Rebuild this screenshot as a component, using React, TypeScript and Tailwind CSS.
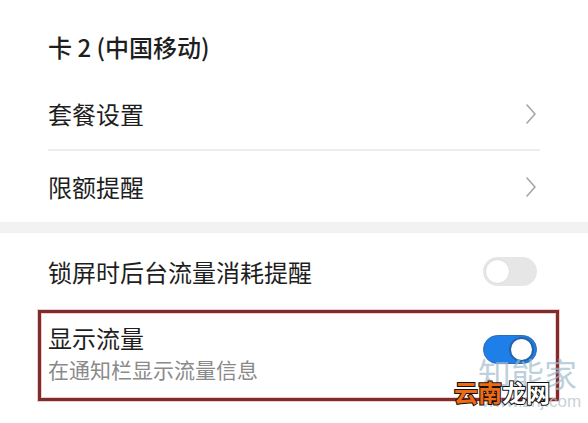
import React from "react";

function Chevron() {
  return (
    <svg width="12" height="22" viewBox="0 0 12 22" fill="none" className="mr-[3px]">
      <path d="M2 2 L10 11 L2 20" stroke="#a6a6a6" strokeWidth="1.6" strokeLinecap="round" strokeLinejoin="round" />
    </svg>
  );
}

function Toggle({ on }: { on: boolean }) {
  if (on) {
    return (
      <div className="w-[54px] h-[29px] rounded-full bg-[#1f7fe9] border border-[#2a6db5] flex items-center justify-end pr-[2px] shrink-0">
        <div className="w-[25px] h-[25px] rounded-full bg-white border-2 border-[#2463a8]" />
      </div>
    );
  }
  return (
    <div className="w-[54px] h-[29px] rounded-full bg-[#e6e6e6] flex items-center pl-[2px] shrink-0">
      <div className="w-[25px] h-[25px] rounded-full bg-white border border-[#dcdcdc]" />
    </div>
  );
}

export default function App() {
  return (
    <div className="relative w-[588px] h-[423px] overflow-hidden bg-white text-[#1e1e1e] font-['Noto_Sans_CJK_SC','Noto_Sans',sans-serif]">
      <div className="px-12">
        <div className="pt-[31px] pb-[16px] text-[24px] leading-8 font-medium">卡 2 (中国移动)</div>
        <div className="h-[70px] flex items-center justify-between">
          <span className="text-[24px] leading-8">套餐设置</span>
          <Chevron />
        </div>
        <div className="h-[2px] bg-[#ededed]" />
        <div className="h-[71px] flex items-center justify-between">
          <span className="text-[24px] leading-8">限额提醒</span>
          <Chevron />
        </div>
      </div>
      <div className="h-[11px] bg-[#f2f2f2]" />
      <div className="h-[77px] px-12 flex items-center justify-between">
        <span className="text-[24px] leading-8">锁屏时后台流量消耗提醒</span>
        <div className="mr-[3px]">
          <Toggle on={false} />
        </div>
      </div>
      <div className="ml-[38px] w-[521px] h-[91px] border-[3px] border-[#7e2c2c] shadow-[0_0_0_1px_#f2cccc,inset_0_0_0_1px_#f2cccc] flex items-start justify-between pl-[7px] pr-[19px]">
        <div className="flex flex-col pt-[10px]">
          <span className="text-[24px] leading-[30px]">显示流量</span>
          <span className="mt-[2px] text-[21px] leading-[28px] text-[#8a8a8a]">在通知栏显示流量信息</span>
        </div>
        <div className="mt-[22px]">
          <Toggle on={true} />
        </div>
      </div>

      <div className="absolute left-[478px] top-[357px] text-[33px] leading-none text-[#9fbccb]/70 font-['Noto_Sans_CJK_SC',sans-serif]">
        知能家
      </div>
      <div className="absolute left-[482px] top-[393px] text-[17px] leading-none text-[#b6c7d0]/80 font-['Liberation_Sans',sans-serif]">
        www.znj.com
      </div>
      <div className="absolute left-[454px] top-[380px] text-[24px] leading-none font-bold [-webkit-text-stroke:2px_#111] [paint-order:stroke_fill] font-['Noto_Sans_CJK_SC',sans-serif]">
        <span className="text-[#f06a12]">云南</span>
        <span className="text-white">龙网</span>
      </div>
    </div>
  );
}
